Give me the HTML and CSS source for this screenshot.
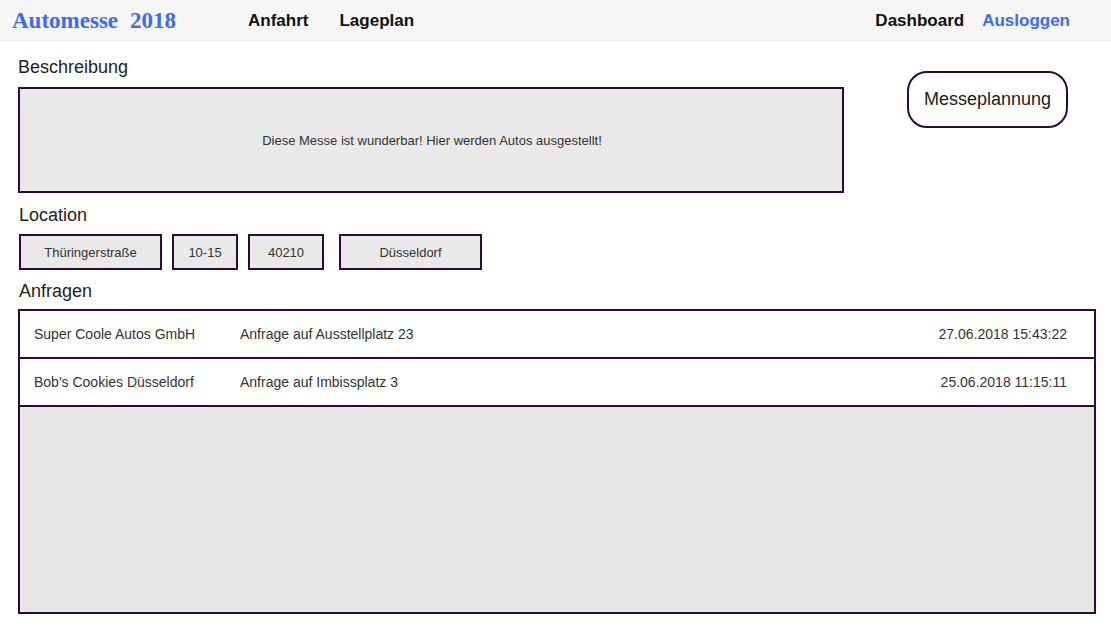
FILE: index.html
```
<!DOCTYPE html>
<html lang="de">
<head>
<meta charset="utf-8">
<title>Automesse 2018</title>
<link rel="stylesheet" href="styles.css">
</head>
<body>
<header class="navbar">
  <div class="brand"><span>Automesse</span><span class="brand-year">2018</span></div>
  <nav class="nav-left">
    <a class="nav-link" href="#">Anfahrt</a>
    <a class="nav-link" href="#">Lageplan</a>
  </nav>
  <nav class="nav-right">
    <a class="nav-link" href="#">Dashboard</a>
    <a class="nav-link nav-link-blue" href="#">Ausloggen</a>
  </nav>
</header>
<main class="content">
  <div class="top-row">
    <section class="desc-col">
      <h2 class="label label-first">Beschreibung</h2>
      <div class="desc-box">Diese Messe ist wunderbar! Hier werden Autos ausgestellt!</div>
    </section>
    <button class="plan-btn">Messeplannung</button>
  </div>
  <h2 class="label label-location">Location</h2>
  <div class="loc-row">
    <div class="loc-box loc-street">Thüringerstraße</div>
    <div class="loc-box loc-nr">10-15</div>
    <div class="loc-box loc-zip">40210</div>
    <div class="loc-box loc-city">Düsseldorf</div>
  </div>
  <h2 class="label label-anfragen">Anfragen</h2>
  <div class="requests">
    <div class="req-row">
      <span class="req-company">Super Coole Autos GmbH</span>
      <span class="req-text">Anfrage auf Ausstellplatz 23</span>
      <span class="req-date">27.06.2018 15:43:22</span>
    </div>
    <div class="req-row">
      <span class="req-company">Bob's Cookies Düsseldorf</span>
      <span class="req-text">Anfrage auf Imbissplatz 3</span>
      <span class="req-date">25.06.2018 11:15:11</span>
    </div>
    <div class="req-empty"></div>
  </div>
</main>
</body>
</html>
```
FILE: styles.css
```
* { box-sizing: border-box; }
html, body { margin: 0; padding: 0; background: #ffffff; }
body { font-family: "Liberation Sans", Arial, sans-serif; color: #222; }

.navbar {
  height: 42px;
  background: #f6f6f6;
  display: flex;
  align-items: center;
  padding: 0 41px 0 12px;
}
.brand {
  font-family: "Liberation Serif", "Times New Roman", serif;
  font-weight: bold;
  font-size: 23px;
  color: #3d6cf3;
  width: 236px;
  display: flex;
}
.brand-year { margin-left: 12px; }
.nav-left { display: flex; gap: 31px; }
.nav-right { display: flex; gap: 18px; margin-left: auto; }
.nav-link {
  font-size: 17px;
  font-weight: bold;
  color: #111;
  text-decoration: none;
}
.nav-link-blue { color: #3d6cf3; }

.content { padding: 0 15px 0 18px; }

.label {
  margin: 0;
  font-size: 18px;
  font-weight: normal;
  color: #222;
  line-height: 21px;
}
.label-first { margin-top: 15px; margin-bottom: 9px; padding-left: 0; }
.label-location { margin-top: 12px; margin-bottom: 8px; padding-left: 1px; }
.label-anfragen { margin-top: 11px; margin-bottom: 7px; padding-left: 1px; }

.top-row { display: flex; align-items: flex-start; }
.desc-col { width: 826px; }
.desc-box {
  height: 106px;
  border: 2px solid #2f0a38;
  background: #e9e9e9;
  font-size: 13px;
  color: #333;
  display: flex;
  align-items: center;
  justify-content: center;
  padding-left: 2px;
}
.plan-btn {
  margin-left: 63px;
  margin-top: 29px;
  width: 161px;
  height: 57px;
  border: 2px solid #2f0a38;
  border-radius: 20px;
  background: #fff;
  font-family: "Liberation Sans", Arial, sans-serif;
  font-size: 18px;
  color: #222;
  padding: 0;
}

.loc-row { display: flex; padding-left: 1px; }
.loc-box {
  height: 36px;
  border: 2px solid #2f0a38;
  background: #e9e9e9;
  font-size: 13px;
  color: #333;
  display: flex;
  align-items: center;
  justify-content: center;
}
.loc-street { width: 143px; margin-right: 10px; }
.loc-nr { width: 66px; margin-right: 10px; }
.loc-zip { width: 76px; margin-right: 15px; }
.loc-city { width: 143px; }

.requests {
  width: 1078px;
  height: 305px;
  border: 2px solid #2f0a38;
  display: flex;
  flex-direction: column;
}
.req-row {
  height: 48px;
  flex: none;
  display: flex;
  align-items: center;
  border-bottom: 2px solid #2f0a38;
  background: #fff;
  font-size: 14px;
  color: #333;
  padding: 0 27px 1px 14px;
}
.req-company { width: 206px; }
.req-text { flex: 1; }
.req-date { text-align: right; }
.req-empty { flex: 1; background: #e6e6e6; }
```
